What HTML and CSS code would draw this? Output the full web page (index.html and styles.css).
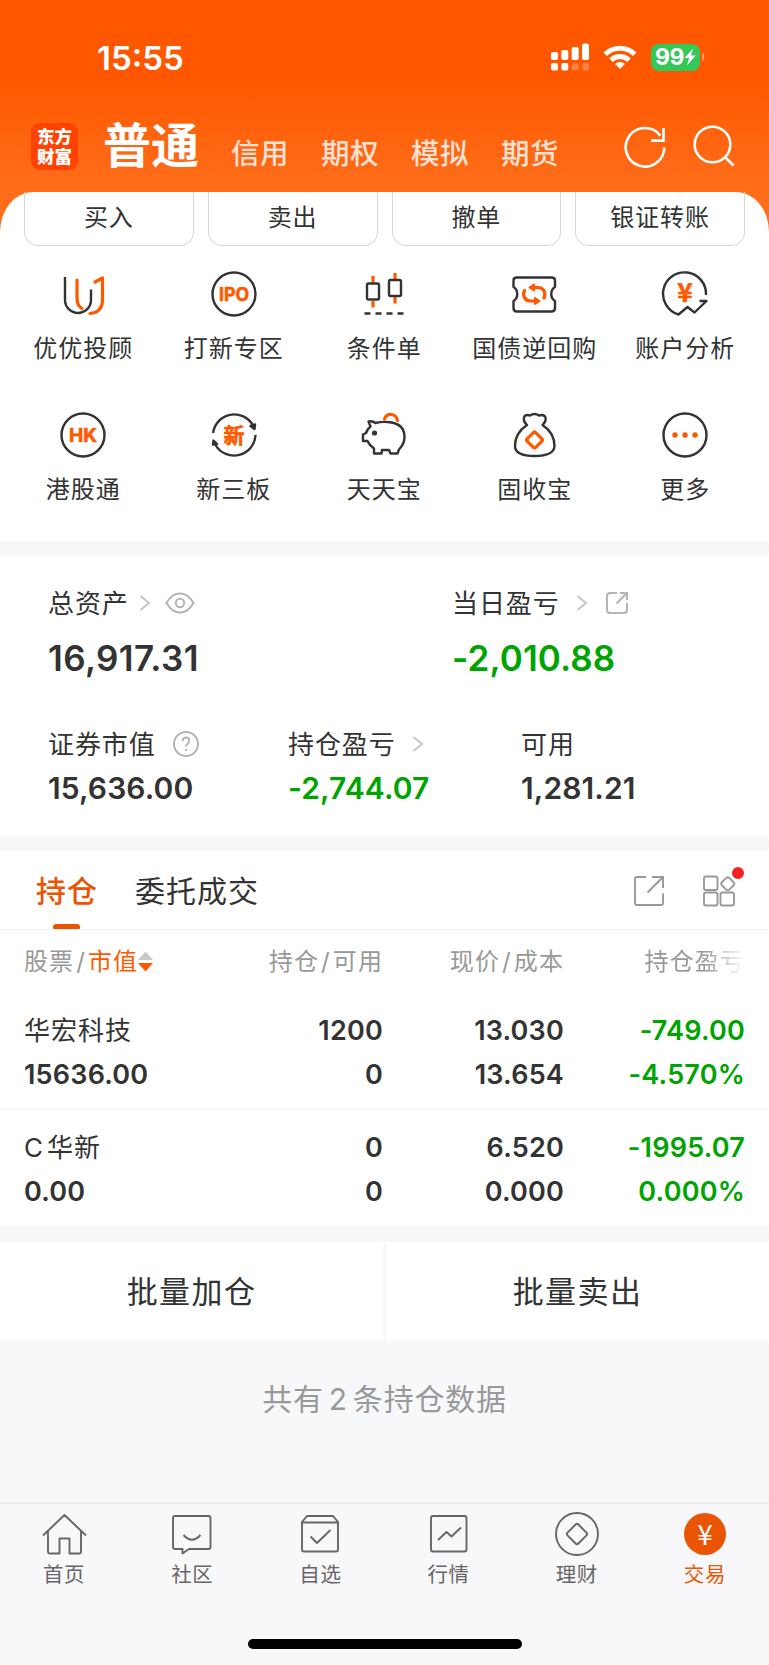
FILE: index.html
```html
<!DOCTYPE html>
<html lang="zh-CN">
<head>
    <meta charset="UTF-8">
    <meta name="viewport" content="width=device-width, initial-scale=1.0">
    <title>交易</title>
    <link rel="stylesheet" href="styles.css">
</head>
<body>

<div class="page">

    <!-- Status bar -->
    <div class="status-bar">
        <span class="time">15:55</span>
        <div class="status-icons">
            <svg class="signal" width="38" height="28" viewBox="0 0 38 28" fill="#fff">
                <rect x="0" y="9" width="7" height="8" rx="2"/>
                <rect x="10.3" y="7" width="7" height="10" rx="2"/>
                <rect x="20.7" y="4" width="7" height="13" rx="2"/>
                <rect x="31" y="0.5" width="7" height="16.5" rx="2"/>
                <rect x="0" y="20" width="7" height="7.5" rx="2"/>
                <rect x="10.3" y="20" width="7" height="7.5" rx="2"/>
                <rect x="20.7" y="20" width="7" height="7.5" rx="2" opacity=".25"/>
                <rect x="31" y="20" width="7" height="7.5" rx="2" opacity=".25"/>
            </svg>
            <svg class="wifi" width="34" height="26" viewBox="0 0 34 26" fill="none" stroke="#fff" stroke-width="5">
                <path d="M2.2 10.2a21.5 21.5 0 0 1 29.6 0"/>
                <path d="M8 16.2a13 13 0 0 1 18 0"/>
                <path d="M17 25l-4.900-5a7 7 0 0 1 9.800 0z" fill="#fff" stroke="none"/>
            </svg>
            <div class="battery">
                <span>99</span>
                <svg width="12" height="18" viewBox="0 0 12 18"><path d="M9 0.5L0.5 10h4.6L3 17.5 11.6 7.6H7z" fill="#fff"/></svg>
            </div>
            <i class="battery-cap"></i>
        </div>
    </div>

    <!-- Account types -->
    <div class="header">
        <div class="logo">东方<br>财富</div>
        <div class="account active">普通</div>
        <div class="account">信用</div>
        <div class="account">期权</div>
        <div class="account">模拟</div>
        <div class="account">期货</div>
        <div class="header-icons">
            <svg width="44" height="44" viewBox="0 0 44 44" fill="none" stroke="#fff" stroke-width="2.6">
                <path d="M41.3 22.5A19.3 19.3 0 1 1 37.4 10.6"/>
                <path d="M40.5 3v12.6H28"/>
            </svg>
            <svg width="44" height="44" viewBox="0 0 44 44" fill="none" stroke="#fff" stroke-width="2.6">
                <circle cx="20.5" cy="19.5" r="17.8"/>
                <path d="M33 32l8.5 8.5"/>
            </svg>
        </div>
    </div>

    <div class="sheet">

        <!-- Trade buttons -->
        <div class="trade-row">
            <div class="trade-btn">买入</div>
            <div class="trade-btn">卖出</div>
            <div class="trade-btn">撤单</div>
            <div class="trade-btn">银证转账</div>
        </div>

        <!-- Shortcuts -->
        <div class="shortcuts">
            <div class="shortcut">
                <svg viewBox="0 0 48 48">
                    <g class="dark"><path d="M6 7v23a13 13 0 0 0 26 0V19.5"/></g>
                    <g class="orange"><path d="M18 10v18q0 7.500 5 10.500"/><path d="M36 12l7.500-4v22.500q-.5 12-12.500 13"/></g>
                </svg>
                <span>优优投顾</span>
            </div>
            <div class="shortcut">
                <svg viewBox="0 0 48 48">
                    <circle class="dark" cx="24" cy="24" r="21.500"/>
                    <text class="badge-text" x="24" y="30.700" font-size="18.500" textLength="30" lengthAdjust="spacingAndGlyphs">IPO</text>
                </svg>
                <span>打新专区</span>
            </div>
            <div class="shortcut">
                <svg viewBox="0 0 48 48">
                    <g class="orange"><path d="M13 6v6.500M13 31v6.500M35 3v6.500M35 27v6.500" stroke-linecap="butt"/></g>
                    <g class="dark">
                        <rect x="7" y="13.500" width="12" height="16" rx="1.500"/>
                        <rect x="29" y="10" width="12" height="16" rx="1.500"/>
                        <path d="M4.500 43.500h6M15.500 43.500h6M26.500 43.500h6M37.500 43.500h6"/>
                    </g>
                </svg>
                <span>条件单</span>
            </div>
            <div class="shortcut">
                <svg viewBox="0 0 48 48">
                    <path class="dark" d="M6 7.500h34.500q3.500 0 3.500 3v6.500c-5 3-5 11 0 14v7q0 3.500-3.500 3.500H6q-3.500 0-3.500-3.500v-7c5-3 5-11 0-14v-6.500q0-3 3.500-3z"/>
                    <g class="orange">
                        <path d="M13.500 20.500c-2.500 5 .5 10.500 6 10.500h4"/>
                        <path d="M33 28c2.500-5-.5-10.500-6-10.500h-4"/>
                        <path d="M23 14.500v6l-4.500-3zM24 28v6l4.500-3z" fill="#ff5900" stroke-width="2"/>
                    </g>
                </svg>
                <span>国债逆回购</span>
            </div>
            <div class="shortcut">
                <svg viewBox="0 0 48 48">
                    <path class="dark" d="M45 25A21.500 21.500 0 1 0 17.500 44.500L26.500 37l7 5.500 12-11.500h-7"/>
                    <text class="badge-text yuan" x="24" y="32" font-size="26">¥</text>
                </svg>
                <span>账户分析</span>
            </div>
            <div class="shortcut">
                <svg viewBox="0 0 48 48">
                    <circle class="dark" cx="24" cy="24" r="21.500"/>
                    <text class="badge-text" x="24" y="30.700" font-size="18.500" textLength="28" lengthAdjust="spacingAndGlyphs">HK</text>
                </svg>
                <span>港股通</span>
            </div>
            <div class="shortcut">
                <svg viewBox="0 0 48 48">
                    <g class="dark">
                        <path d="M3 22A21.500 21.500 0 0 1 42.500 13.500"/>
                        <path d="M45.500 24A21.500 21.500 0 0 1 5.500 34"/>
                        <path d="M40.500 15l4.500-1.500-.5 4.500zM3.500 29.500l-.5 4 4-.5z" fill="#333"/>
                    </g>
                    <text class="badge-text" x="24" y="31.500" font-size="21">新</text>
                </svg>
                <span>新三板</span>
            </div>
            <div class="shortcut">
                <svg viewBox="0 0 48 48">
                    <path class="dark" d="M8.500 10.500q4-1 7 1.500 6-1.500 12-1 17 1 17 15 0 7-5.500 12.500l-1.500 4h-7l-1.500-3.500h-7l-.5 3.500h-7.500v-5q-4.500-3-6.500-7.500H3v-6.500l3-1.500q1.500-4 4.500-6.500z"/>
                    <circle cx="14.500" cy="22" r="2.600" fill="#333"/>
                    <path class="orange" d="M24.500 8q2-5 7-4.500 5 .5 6 6"/>
                </svg>
                <span>天天宝</span>
            </div>
            <div class="shortcut">
                <svg viewBox="0 0 48 48">
                    <path class="dark" d="M16 14q-4-4-3-7.500 1-3.500 6-2 4.500-3 9 0 5-1.500 6.500 2 1 3.500-3 7.500 12 8 12 21-.5 10-20 10-19.500 0-19.500-10 0-13 12-21z"/>
                    <rect class="orange" x="17.500" y="23" width="12" height="12" rx="1.500" transform="rotate(45 23.5 29)"/>
                </svg>
                <span>固收宝</span>
            </div>
            <div class="shortcut">
                <svg viewBox="0 0 48 48">
                    <circle class="dark" cx="24" cy="24" r="21.500"/>
                    <g fill="#ff5900"><circle cx="14" cy="24" r="2.700"/><circle cx="24" cy="24" r="2.700"/><circle cx="34" cy="24" r="2.700"/></g>
                </svg>
                <span>更多</span>
            </div>
        </div>
    </div>

    <!-- Assets -->
    <div class="assets">
        <div class="asset-row main">
            <div class="asset">
                <div class="label">总资产
                    <svg class="arrow" width="12" height="18" viewBox="0 0 12 18"><path d="M1.500 2l8.500 7-8.500 7"/></svg>
                    <svg class="eye" width="30" height="22" viewBox="0 0 30 22"><path d="M1.500 11Q7 1.500 15 1.500T28.500 11Q23 20.500 15 20.500T1.500 11z"/><circle cx="15" cy="11" r="4.200"/></svg>
                </div>
                <div class="value total">16,917.31</div>
            </div>
            <div class="asset">
                <div class="label">当日盈亏
                    <svg class="arrow far" width="12" height="18" viewBox="0 0 12 18"><path d="M1.500 2l8.500 7-8.500 7"/></svg>
                    <svg class="share" width="24" height="24" viewBox="0 0 24 24"><path d="M12 2H5Q2 2 2 5v14q0 3 3 3h14q3 0 3-3v-7"/><path d="M11.500 12.500L22 2M15 2h7v7"/></svg>
                </div>
                <div class="value green">-2,010.88</div>
            </div>
        </div>
        <div class="asset-row sub">
            <div class="asset">
                <div class="label">证券市值
                    <svg class="help" width="26" height="26" viewBox="0 0 26 26"><circle cx="13" cy="13" r="12"/><path d="M9.700 10.300q0-3.700 3.300-3.700t3.300 3.200c0 2.800-3.300 3-3.300 5.700M13 18v2"/></svg>
                </div>
                <div class="value">15,636.00</div>
            </div>
            <div class="asset">
                <div class="label">持仓盈亏
                    <svg class="arrow far" width="12" height="18" viewBox="0 0 12 18"><path d="M1.500 2l8.500 7-8.500 7"/></svg>
                </div>
                <div class="value green">-2,744.07</div>
            </div>
            <div class="asset">
                <div class="label">可用</div>
                <div class="value">1,281.21</div>
            </div>
        </div>
    </div>

    <!-- Positions -->
    <div class="positions">
        <div class="tabs">
            <div class="tab active">持仓</div>
            <div class="tab">委托成交</div>
            <div class="tab-icons">
                <svg width="32" height="32" viewBox="0 0 32 32"><path d="M13 2H4Q2 2 2 4v24q0 2 2 2h24q2 0 2-2V18.500"/><path d="M14.500 17.500L30 2M19 2h11v11"/></svg>
                <div class="layout-icon">
                    <svg width="34" height="34" viewBox="0 0 34 34"><rect x="2" y="2.500" width="13.500" height="13.500" rx="2"/><rect x="2" y="18.500" width="13.500" height="13" rx="2"/><rect x="18.500" y="18.500" width="13.500" height="13" rx="2"/><rect x="20.500" y="4.500" width="10.500" height="10.500" rx="2.500" transform="rotate(45 25.750 9.750)"/></svg>
                    <i class="dot"></i>
                </div>
            </div>
        </div>

        <div class="row table-head">
            <div class="col">股票<b>/</b><em>市值</em><svg class="sort" width="15" height="21" viewBox="0 0 15 21"><path d="M7.500 0.500L15 9H0z" fill="#c8c8c8"/><path d="M7.500 20.500L15 12H0z" fill="#ff5900"/></svg></div>
            <div class="col">持仓<b>/</b>可用</div>
            <div class="col">现价<b>/</b>成本</div>
            <div class="col fade">持仓盈亏</div>
        </div>

        <div class="row stock">
            <div class="col"><span class="name">华宏科技</span><span>15636.00</span></div>
            <div class="col"><span>1200</span><span>0</span></div>
            <div class="col"><span>13.030</span><span>13.654</span></div>
            <div class="col green"><span>-749.00</span><span>-4.570%</span></div>
        </div>
        <div class="row stock">
            <div class="col"><span class="name"><i>C</i>华新</span><span>0.00</span></div>
            <div class="col"><span>0</span><span>0</span></div>
            <div class="col"><span>6.520</span><span>0.000</span></div>
            <div class="col green"><span>-1995.07</span><span>0.000%</span></div>
        </div>
    </div>

    <!-- Batch actions -->
    <div class="batch">
        <div class="batch-btn">批量加仓</div>
        <div class="batch-btn">批量卖出</div>
    </div>
    <div class="summary">共有<span>2</span>条持仓数据</div>

    <!-- Bottom navigation -->
    <div class="bottom">
        <div class="tabbar">
            <div class="nav-item">
                <svg viewBox="0 0 46 46"><path d="M2 24.500L23.500 4 45 24.500M7 20.500V41q0 1.500 1.500 1.500h10V27.500h10v15h10q1.500 0 1.500-1.500V20.500"/></svg>
                <span>首页</span>
            </div>
            <div class="nav-item">
                <svg viewBox="0 0 46 46"><path d="M6 5h33.500q2 0 2 2v29q0 2-2 2H20l-6.500 4.500V38H6q-2 0-2-2V7q0-2 2-2z"/><path d="M14.500 24q8.500 9.500 17 0"/></svg>
                <span>社区</span>
            </div>
            <div class="nav-item">
                <svg viewBox="0 0 46 46"><path d="M10 5h26l5 6v27.500q0 2-2 2H7q-2 0-2-2V11zM5 11.500h36"/><path d="M13.500 25.500l6.500 6.500L33.500 19"/></svg>
                <span>自选</span>
            </div>
            <div class="nav-item">
                <svg viewBox="0 0 46 46"><rect x="5" y="5" width="35.500" height="35.500" rx="2"/><path d="M12 29l8.500-8 5 4.500L35 16.500"/></svg>
                <span>行情</span>
            </div>
            <div class="nav-item">
                <svg viewBox="0 0 46 46"><circle cx="23" cy="23" r="21"/><rect x="15.300" y="15.300" width="15.400" height="15.400" rx="2" transform="rotate(45 23 23)"/></svg>
                <span>理财</span>
            </div>
            <div class="nav-item active">
                <div class="trade-icon">¥</div>
                <span>交易</span>
            </div>
        </div>
        <div class="home-indicator"></div>
    </div>
</div>

</body>
</html>
```
FILE: styles.css
```css
/* Global Styles */
* {
    margin: 0;
    padding: 0;
    box-sizing: border-box;
}

body {
    background: #f7f8fa;
    color: #333;
    font-family: 'Inter', 'Noto Sans CJK SC', sans-serif;
}

i, em, b {
    font-style: normal;
    font-weight: normal;
}

svg {
    display: block;
    flex-shrink: 0;
}

.page {
    width: 769px;
    height: 1665px;
    display: flex;
    flex-direction: column;
    overflow: hidden;
    background: linear-gradient(#ff5700 0, #ff5700 75px, #ff6c18 180px, #ff701e 240px, #f7f8fa 240px);
}

.green {
    color: #00a400;
}

/* Status bar */
.status-bar {
    height: 116px;
    padding: 0 65px 0 97px;
    display: flex;
    justify-content: space-between;
    color: #fff;
}

.time {
    font-size: 33px;
    font-weight: 600;
    line-height: 40px;
    padding-top: 38px;
    letter-spacing: 0;
}

.status-icons {
    display: flex;
    align-items: center;
    height: 28px;
    margin-top: 43px;
}

.wifi {
    margin: 0 14px;
}

.battery {
    width: 49px;
    height: 27px;
    border-radius: 8px;
    background: #34c759;
    display: flex;
    align-items: center;
    justify-content: center;
    font-size: 23px;
    font-weight: 700;
    letter-spacing: -0.5px;
}

.battery-cap {
    width: 2px;
    height: 8px;
    margin-left: 2px;
    border-radius: 0 2px 2px 0;
    background: rgba(255, 255, 255, 0.4);
}

/* Header */
.header {
    height: 76px;
    padding: 0 33px 0 31px;
    display: flex;
    align-items: center;
    color: #fff;
}

.logo {
    width: 47px;
    height: 47px;
    margin: -15px 25px 0 0;
    padding-top: 4px;
    border-radius: 9px;
    background: #ff4200;
    font-size: 17.5px;
    font-weight: 900;
    line-height: 19.5px;
    text-align: center;
}

.account {
    width: 90px;
    height: 40px;
    font-size: 28.5px;
    font-weight: 500;
    line-height: 40px;
    letter-spacing: 0.6px;
    color: rgba(255, 255, 255, 0.82);
}

.account.active {
    width: 128px;
    height: 70px;
    margin-top: -16px;
    line-height: 70px;
    font-size: 48px;
    font-weight: 700;
    letter-spacing: 0;
    color: #fff;
}

.header-icons {
    display: flex;
    gap: 25px;
    margin: -14px 0 0 auto;
}

/* White sheet */
.sheet {
    height: 349px;
    background: #fff;
    border-radius: 33px 33px 0 0 / 40px 40px 0 0;
}

.trade-row {
    display: flex;
    gap: 14px;
    padding: 0 24px;
}

.trade-btn {
    flex: 1;
    height: 54px;
    border: 1px solid #d8d8d8;
    border-top: none;
    border-radius: 0 0 14px 14px;
    text-align: center;
    font-size: 24px;
    line-height: 52px;
    letter-spacing: 1px;
}

.shortcuts {
    display: grid;
    grid-template-columns: repeat(5, 150.5px);
    padding: 24px 8px 0;
}

.shortcut {
    height: 141px;
    display: flex;
    flex-direction: column;
    align-items: center;
}

.shortcut svg {
    width: 48px;
    height: 48px;
}

.shortcut span {
    margin-top: 13px;
    font-size: 24px;
    line-height: 36px;
    letter-spacing: 1px;
    white-space: nowrap;
}

.dark {
    fill: none;
    stroke: #333;
    stroke-width: 2.4;
    stroke-linejoin: round;
}

.orange {
    fill: none;
    stroke: #ff5900;
    stroke-width: 3.2;
    stroke-linecap: round;
    stroke-linejoin: round;
}

.badge-text {
    fill: #ff5900;
    stroke: #ff5900;
    stroke-width: 0.6;
    stroke-linejoin: round;
    font-weight: 700;
    text-anchor: middle;
}

.badge-text.yuan {
    font-family: 'Noto Sans CJK SC', sans-serif;
}

/* Assets */
.assets {
    height: 280px;
    margin-top: 15px;
    padding: 25px 48px 0;
    background: #fff;
}

.asset-row {
    display: grid;
}

.asset-row.main {
    height: 141px;
    grid-template-columns: 404px 1fr;
}

.asset-row.sub {
    grid-template-columns: 240px 233px 1fr;
}

.label {
    height: 40px;
    display: flex;
    align-items: center;
    font-size: 26px;
    letter-spacing: 0.9px;
}

.label svg {
    margin-top: 4px;
    fill: none;
    stroke: #b5b5b5;
    stroke-width: 2;
}

.label .arrow {
    margin-left: 10px;
    stroke: #c5c5c5;
}

.label .arrow.far {
    margin-left: 16px;
}

.label .eye {
    margin-left: 14px;
}

.label .share {
    margin-left: 17px;
}

.label .help {
    margin-left: 17px;
}

.value {
    font-weight: 600;
    font-size: 30px;
    line-height: 40px;
    margin-top: 6px;
    letter-spacing: 0.1px;
}

.main .value {
    font-size: 35px;
    line-height: 50px;
    margin-top: 12px;
}

.main .total {
    letter-spacing: 0.4px;
}

/* Positions */
.positions {
    height: 375px;
    margin-top: 15px;
    background: #fff;
}

.tabs {
    height: 79px;
    padding: 0 33px 0 36px;
    display: flex;
    border-bottom: 1px solid #eee;
}

.tab {
    height: 78px;
    margin-right: 37px;
    font-size: 30px;
    line-height: 80px;
    letter-spacing: 1px;
}

.tab.active {
    position: relative;
    color: #ea5504;
    font-weight: 500;
}

.tab.active::after {
    content: "";
    position: absolute;
    left: 17px;
    bottom: 0;
    width: 27px;
    height: 5px;
    border-radius: 3px 3px 1px 1px;
    background: #ea5504;
}

.tab-icons {
    display: flex;
    align-items: center;
    gap: 37px;
    margin: 1px 0 0 auto;
}

.tab-icons svg {
    fill: none;
    stroke: #999;
    stroke-width: 1.9;
}

.layout-icon {
    position: relative;
}

.dot {
    position: absolute;
    top: -7px;
    right: -8px;
    width: 12px;
    height: 12px;
    border-radius: 50%;
    background: #f52222;
}

.row {
    display: grid;
    grid-template-columns: 178px 181px 181px 181px;
    padding: 0 24px;
    text-align: right;
}

.col:first-child {
    text-align: left;
    white-space: nowrap;
}

.table-head {
    height: 64px;
    font-size: 24px;
    line-height: 64px;
    letter-spacing: 1.1px;
    color: #999;
}

.table-head b {
    margin: 0 2px;
}

.table-head em {
    color: #ff5900;
}

.sort {
    display: inline-block;
    margin-left: 0;
    vertical-align: -2px;
}

.fade {
    -webkit-mask-image: linear-gradient(to right, #000 140px, transparent 181px);
    mask-image: linear-gradient(to right, #000 140px, transparent 181px);
}

.stock {
    height: 116px;
    padding-top: 13px;
    border-bottom: 2px solid #f6f6f7;
}

.stock:last-child {
    padding-top: 14px;
    border-bottom: none;
}

.stock span {
    display: block;
    height: 44px;
    font-size: 27px;
    font-weight: 600;
    line-height: 48px;
    letter-spacing: 0.2px;
}

.stock .name {
    font-size: 26px;
    font-weight: 400;
    letter-spacing: 1px;
}

.name i {
    margin-right: 3px;
}

/* Batch actions */
.batch {
    height: 98px;
    margin-top: 16px;
    display: flex;
    gap: 3px;
}

.batch-btn {
    flex: 1;
    background: #fff;
    text-align: center;
    font-size: 31px;
    line-height: 99px;
    letter-spacing: 1.4px;
}

.summary {
    height: 162px;
    text-align: center;
    color: #999;
    font-size: 30px;
    line-height: 118px;
    letter-spacing: 0.8px;
}

.summary span {
    margin: 0 5px;
}

/* Bottom navigation */
.bottom {
    height: 163px;
    background: #f8f8fb;
    border-top: 2px solid #ececef;
}

.tabbar {
    height: 135px;
    padding-top: 7px;
    display: flex;
}

.nav-item {
    flex: 1;
    display: flex;
    flex-direction: column;
    align-items: center;
    font-size: 20.5px;
    color: #666;
}

.nav-item svg {
    width: 46px;
    height: 46px;
    fill: none;
    stroke: #666;
    stroke-width: 1.9;
    stroke-linejoin: round;
}

.nav-item span {
    margin-top: 4px;
    line-height: 28px;
    letter-spacing: 0.6px;
}

.nav-item.active {
    color: #ea5504;
}

.trade-icon {
    width: 42px;
    height: 42px;
    margin: 2px;
    border-radius: 50%;
    background: #ea5504;
    color: #fff;
    font-family: 'Noto Sans CJK SC', sans-serif;
    font-size: 28px;
    line-height: 40px;
    text-align: center;
}

.home-indicator {
    width: 274px;
    height: 10px;
    margin: 0 auto;
    border-radius: 5px;
    background: #000;
}
```
